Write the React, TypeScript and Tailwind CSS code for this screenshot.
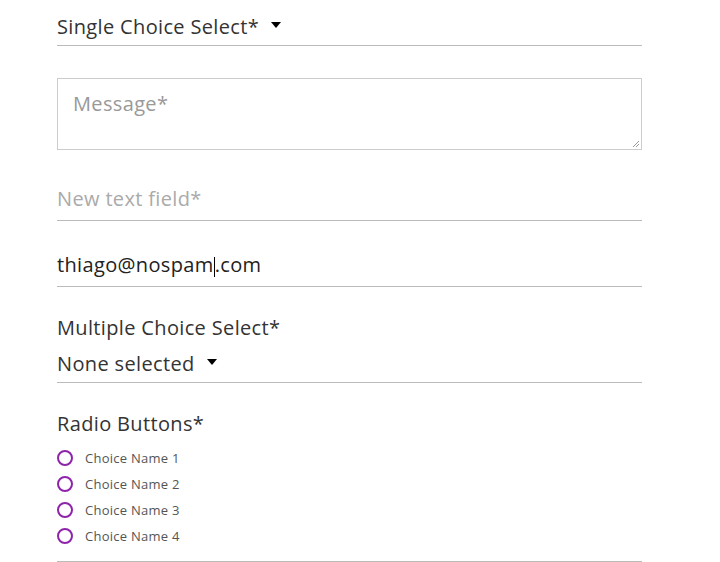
import React from "react";

function Caret() {
  return <span className="inline-block w-0 h-0 border-l-[5px] border-r-[5px] border-t-[6px] border-l-transparent border-r-transparent border-t-black ml-[12px] align-middle relative top-[-2px]" />;
}

function Radio({ label }: { label: string }) {
  return (
    <div className="h-[26px] flex items-center">
      <span className="w-[16px] h-[16px] rounded-full border-2 border-[#8e24aa] box-border" />
      <span className="ml-[12px] text-[13px] tracking-[0.25px] text-[#555]">{label}</span>
    </div>
  );
}

export default function App() {
  return (
    <div className="w-[720px] h-[562px] bg-white overflow-hidden" style={{ fontFamily: '"Open Sans", sans-serif' }}>
      <div className="ml-[57px] w-[585px] flex flex-col text-[20px] tracking-[0.35px] leading-[26px] text-[#333]">
        <div className="pt-[14px] pb-[5px] border-b border-[#bbb] flex items-center">
          <span>Single Choice Select*</span>
          <Caret />
        </div>
        <div className="mt-[32px] h-[72px] border border-[#ccc] pt-[12px] pl-[15px] text-[#999] relative">
          Message*
          <svg className="absolute right-[1px] bottom-[1px]" width="8" height="8" viewBox="0 0 8 8">
            <path d="M7 1 L1 7 M7 4 L4 7" stroke="#999" strokeWidth="1" />
          </svg>
        </div>
        <div className="mt-[36px] pb-[8px] border-b border-[#bbb] text-[#aaa]">New text field*</div>
        <div className="mt-[31px] pb-[8px] border-b border-[#bbb] text-[#222]">
          thiago@nospam<span className="inline-block w-px h-[20px] bg-black align-middle" />.com
        </div>
        <div className="mt-[28px]">Multiple Choice Select*</div>
        <div className="mt-[10px] pb-[5px] border-b border-[#bbb] flex items-center">
          <span>None selected</span>
          <Caret />
        </div>
        <div className="mt-[28px]">Radio Buttons*</div>
        <div className="mt-[8px] pb-[12px] border-b border-[#bbb] flex flex-col">
          <Radio label="Choice Name 1" />
          <Radio label="Choice Name 2" />
          <Radio label="Choice Name 3" />
          <Radio label="Choice Name 4" />
        </div>
      </div>
    </div>
  );
}
